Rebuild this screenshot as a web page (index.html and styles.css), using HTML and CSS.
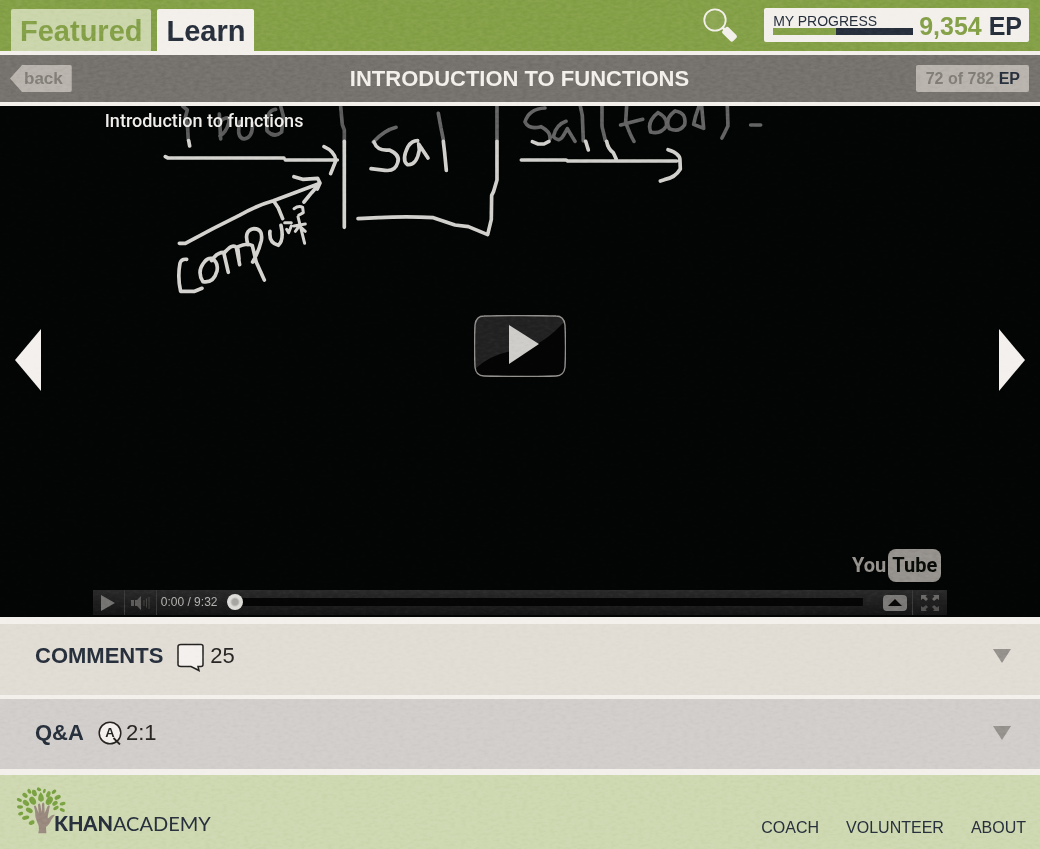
FILE: index.html
```html
<!DOCTYPE html>
<html lang="en">
<head>
<meta charset="utf-8">
<meta name="viewport" content="width=device-width, initial-scale=1">
<title>Introduction to Functions - Khan Academy</title>
<link rel="stylesheet" href="styles.css">
</head>
<body>
<header class="topbar">
  <nav class="tabs" aria-label="Main">
    <a class="tab" href="#featured">Featured</a>
    <a class="tab tab-active" href="#learn" aria-current="page">Learn</a>
  </nav>
  <button class="search" type="button" aria-label="Search">
    <svg width="34" height="34" viewBox="0 0 34 34"><circle cx="12" cy="12" r="10.700" fill="#96ae60" fill-opacity=".5" stroke="#f3f0eb" stroke-width="1.800"/><path d="M19 19l4 4" stroke="#f3f0eb" stroke-width="2.500"/><rect x="19" y="22" width="15" height="8.500" rx="2.500" transform="rotate(45 26.500 26.250)" fill="#f3f0eb"/></svg>
  </button>
  <section class="progress">
    <div class="meter">
      <span>MY PROGRESS</span>
      <div class="meter-track"><div class="meter-fill" style="width:45%"></div></div>
    </div>
    <div class="points">9,354 <b>EP</b></div>
  </section>
</header>

<div class="lessonbar">
  <a class="back" href="#back">back</a>
  <h1>INTRODUCTION TO FUNCTIONS</h1>
  <div class="earned">72 of 782 <b>EP</b></div>
</div>

<main>
  <section class="video">
    <svg class="frame" viewBox="0 106 1040 511" preserveAspectRatio="xMidYMin slice" fill="none" stroke-linecap="round" stroke-linejoin="round" aria-hidden="true">
      <g transform="translate(90 100) scale(.3333)" stroke="#d5d3cf" stroke-width="11">
        <path stroke="#5c5c5c" d="M278 18l14 12-6 22 6 18 3 50M388 42l4 75M388 65q35-25 28 5-8 28-26 38M450 65q-12 48 12 52 28-4 25-48M572 18l8 30-5 48q-22 20-44-4-4-62 26-64M752 18l5 56 6 16v34"/>
        <path d="M296 122l3 16M226 170l8 4H582M586 180H742M702 140q32 14 36 41l-16 40M763 124V382"/>
        <path d="M268 430h18q82-45 162-84 58-32 102-44l140-52-25 28-23 28M612 230l26 8 45-3 7 14-8 18M553 306l12 18 13 32"/>
        <path d="M290 478q-16-2-20 12-8 42 2 84h42l22-9M344 485q-25 30-5 60 32 5 42-32 5-27-16-38-13-1-21 10M365 482q15-25 36-25l14 60M402 460q25-31 37-18l10 52M447 477l-4-36q28-14 44-4l12 50 24 53M474 434q-14-43 18-48 28 1 22 36-8 33-26 64M540 394q-4 35 25 42 18-16 8-60"/>
        <path stroke-width="9" d="M584 368h20M590 388l6 10 8-20M612 326q14-10 26-4l2 16-14 8M624 350l8 32 12 48M612 378l34-6M616 394l12-16 18 16"/>
      </g>
      <g transform="translate(330 100) scale(.3333)" stroke="#d1d0cc" stroke-width="11">
        <path stroke="#666" d="M198 82q-35 9-68 44M325 40l8 44 7 34M501 18v104"/>
        <path d="M132 126q10 28 46 24 34 15 25 38-7 27-38 23l-42-5M263 122q-18 0-29 18-20 40-2 54 28 3 36-44l-2-18 28 42M340 124l4 35 5 52M501 124v116l-10 34-6 12-1 72-11 46-58-24-40-5-65-22q-80-5-164 0l-62 3"/>
      </g>
      <g transform="translate(510 100) scale(.3333)" stroke="#d1d0cc" stroke-width="11">
        <path stroke="#646464" d="M105 24q-48 2-60 42 12 24 48 14 30 16 27 36M168 64q-30 10-38 46 19 22 34-10l8-14 23 38M211 18l6 29 3 76M276 18v61l10 42M350 18l-3 48q12 36 25 58M332 75l66-17M444 38q-34 27-22 58 30 8 47-17 5-27-25-41M495 33q-33 25-17 53 29 13 46-12 7-36-29-41M575 18l6 67-30-12 6-25 10-29M652 18l2 60-18 36M722 75h30"/>
        <path d="M67 125l17 7h18l15-8M227 124l8 26M290 124q4 23 20 34l9 20M34 180l134 0 5 3H500M474 149q37 11 36 32l1 26q-15 26-48 32l-12 4"/>
      </g>
    </svg>
    <button class="step step-prev" type="button" aria-label="Previous video"><svg width="26" height="62" viewBox="0 0 26 62"><path d="M26 0v62L0 31z" fill="#f3f0ed"/></svg></button>
    <div class="player">
      <h2>Introduction to functions</h2>
      <button class="bigplay" type="button" aria-label="Play video">
        <svg width="92" height="62" viewBox="0 0 92 62"><path d="M10 1Q46 0 82 1q8 0 9 9 1 21 0 42-1 9-9 9-36 1-72 0-8 0-9-9-1-21 0-42 1-9 9-9z" fill="#030403"/><path d="M1 52Q0 31 1 10q1-9 9-9 36-1 72 0 7 0 8 6-20 22-40 27-31 3-48 19z" fill="#222"/><path d="M10 1Q46 0 82 1q8 0 9 9 1 21 0 42-1 9-9 9-36 1-72 0-8 0-9-9-1-21 0-42 1-9 9-9z" fill="none" stroke="#92908d" stroke-width="1.400"/><path d="M35 10v39l30-20z" fill="#cfcdca"/></svg>
      </button>
      <div class="youtube"><span>You</span><span class="tube">Tube</span></div>
      <div class="controls">
        <button type="button" class="ctl" aria-label="Play"><svg width="14" height="16" viewBox="0 0 14 16"><path d="M0 0v16l14-8z" fill="#747371"/></svg></button>
        <button type="button" class="ctl" aria-label="Mute"><svg width="20" height="14" viewBox="0 0 20 14"><path d="M1 4h3v6H1zM5 4h2l4-4v14l-4-4H5z" fill="#5c5b59"/><path d="M14 4v6M16.500 2.500v9M19 1v12" stroke="#454443"/></svg></button>
        <span class="time">0:00 / 9:32</span>
        <input class="seek" type="range" min="0" max="572" value="0" aria-label="Seek">
        <button type="button" class="menu" aria-label="Player menu"><svg width="24" height="16" viewBox="0 0 24 16"><rect width="24" height="16" rx="4" fill="#7b7977"/><path d="M5 11h14l-7-7z" fill="#070707"/></svg></button>
        <button type="button" class="ctl full" aria-label="Full screen"><svg width="18" height="16" viewBox="0 0 18 16" fill="#696866"><path d="M0 0h6L4.500 1.500 7 4 5 6 2 3.500 0 5zM18 0h-6l1.500 1.500L11 4l2 2 3-2.500L18 5z"/><path opacity=".7" d="M0 16h6l-1.500-1.500L7 12l-2-2-3 2.500L0 11zM18 16h-6l1.500-1.500L11 12l2-2 3 2.500 2-1.500z"/></svg></button>
      </div>
    </div>
    <button class="step step-next" type="button" aria-label="Next video"><svg width="26" height="62" viewBox="0 0 26 62"><path d="M0 0v62l26-31z" fill="#f3f0ed"/></svg></button>
  </section>

  <button class="panel comments" type="button" aria-expanded="false">
    <b>COMMENTS</b>
    <svg class="bubble" width="28" height="29" viewBox="0 0 28 29"><path d="M4 1.500h20q2 0 2 2v18q0 2-2 2h-3l1 4-8-4H4q-3 0-3-2v-18q0-2 3-2z" fill="#f3f0ed" stroke="#252321" stroke-width="1.500"/></svg>
    <span>25</span>
    <svg class="caret" width="18" height="14" viewBox="0 0 18 14"><path d="M0 0h18L9 14z" fill="#96938f"/></svg>
  </button>
  <button class="panel qa" type="button" aria-expanded="false">
    <b>Q&amp;A</b>
    <svg class="answer" width="24" height="24" viewBox="0 0 24 24"><circle cx="12" cy="12" r="10.800" fill="#f3f0ed" stroke="#252321" stroke-width="1.500"/><text x="12" y="16" text-anchor="middle">A</text><path d="M15.500 17l6.500 6.500" stroke="#252321" stroke-width="1.800"/></svg>
    <span>2:1</span>
    <svg class="caret" width="18" height="14" viewBox="0 0 18 14"><path d="M0 0h18L9 14z" fill="#96938f"/></svg>
  </button>
</main>

<footer class="footer">
  <a class="brand" href="#home">
    <svg width="51" height="48" viewBox="48 62 153 144" aria-hidden="true">
      <g fill="#7ba342">
        <ellipse cx="88" cy="78" rx="5" ry="8" transform="rotate(-30 88 78)"/><ellipse cx="103" cy="83" rx="7" ry="10" transform="rotate(-20 103 83)"/><ellipse cx="117" cy="72" rx="5" ry="7" transform="rotate(-60 117 72)"/><ellipse cx="133" cy="77" rx="4" ry="7" transform="rotate(20 133 77)"/><ellipse cx="145" cy="87" rx="6" ry="10" transform="rotate(20 145 87)"/><ellipse cx="162" cy="79" rx="5" ry="8" transform="rotate(50 162 79)"/>
        <ellipse cx="75" cy="90" rx="6" ry="9" transform="rotate(-50 75 90)"/><path d="M122 80q-10 14-7 25l8 5 8-5q3-12-9-25z"/><ellipse cx="148" cy="106" rx="9" ry="14" transform="rotate(30 148 106)"/><ellipse cx="98" cy="106" rx="9" ry="13" transform="rotate(-30 98 106)"/><ellipse cx="173" cy="96" rx="6" ry="10" transform="rotate(60 173 96)"/>
        <ellipse cx="58" cy="104" rx="5" ry="8" transform="rotate(-70 58 104)"/><ellipse cx="78" cy="113" rx="7" ry="11" transform="rotate(-50 78 113)"/><ellipse cx="165" cy="114" rx="6" ry="9" transform="rotate(50 165 114)"/><ellipse cx="188" cy="115" rx="5" ry="9" transform="rotate(75 188 115)"/><ellipse cx="60" cy="125" rx="5" ry="9" transform="rotate(-85 60 125)"/>
        <ellipse cx="168" cy="128" rx="5" ry="9" transform="rotate(60 168 128)"/><ellipse cx="187" cy="134" rx="5" ry="8" transform="rotate(-70 187 134)"/><ellipse cx="88" cy="135" rx="7" ry="11" transform="rotate(-60 88 135)"/><ellipse cx="62" cy="145" rx="5" ry="8" transform="rotate(75 62 145)"/><ellipse cx="77" cy="157" rx="6" ry="11" transform="rotate(75 77 157)"/><ellipse cx="95" cy="172" rx="6" ry="9" transform="rotate(65 95 172)"/>
      </g>
      <path d="M115 204q5-20-3-32-8-17-7-35l-3-14q4-6 7 3l7 18-2-26q4-7 7 0l4 24 1-27q4-7 7 0l1 29 9-22q6-5 6 2l-6 31q0 7 6 0 7-8 16-7-3 4-10 14-8 18-17 23l1 19z" fill="#9a8a80"/>
    </svg>
    <span class="wordmark"><b>KHAN</b>ACADEMY</span>
  </a>
  <nav class="links" aria-label="Footer">
    <a href="#coach">COACH</a>
    <a href="#volunteer">VOLUNTEER</a>
    <a href="#about">ABOUT</a>
  </nav>
</footer>

<svg class="paper" aria-hidden="true">
  <filter id="grain" x="0" y="0" width="100%" height="100%" color-interpolation-filters="sRGB">
    <feTurbulence type="fractalNoise" baseFrequency=".18 .36" numOctaves="3" seed="4"/>
    <feColorMatrix values=".16 0 0 0 .42 .16 0 0 0 .42 .16 0 0 0 .42 0 0 0 0 1"/>
  </filter>
  <rect width="100%" height="100%" filter="url(#grain)"/>
</svg>
</body>
</html>
```
FILE: styles.css
```css
:root {
  --green: #85a148;
  --paper: #f3f0ec;
  --navy: #27303c;
  --stone: #76726d;
}

* { box-sizing: border-box; }

body {
  position: relative;
  display: flex;
  flex-direction: column;
  min-height: 100vh;
  margin: 0;
  background: var(--paper);
  color: var(--navy);
  font-family: "Liberation Sans", Arial, sans-serif;
}

a { color: inherit; text-decoration: none; }
button { margin: 0; padding: 0; border: 0; background: none; color: inherit; font: inherit; cursor: pointer; }
svg { display: block; flex: none; }
h1, h2 { margin: 0; }

.topbar {
  display: flex;
  align-items: flex-start;
  height: 55px;
  padding: 8px 11px 0;
  border-bottom: 4px solid var(--paper);
  background: var(--green);
}

.tabs { display: flex; align-self: stretch; gap: 6px; margin: 1px auto 0 0; }

.tab {
  padding: 4px 9px 0;
  border-radius: 2px 2px 0 0;
  background: #cbd6ac;
  color: var(--green);
  font-size: 29px;
  font-weight: 700;
  line-height: 36px;
}

.tab-active { background: var(--paper); color: var(--navy); }

.search { margin-right: 27px; }

.progress {
  display: flex;
  align-items: center;
  gap: 6px;
  height: 34px;
  padding: 0 7px 0 9px;
  border-radius: 2px;
  background: var(--paper);
}

.meter { width: 140px; padding-bottom: 1px; font-size: 14px; line-height: 14px; }
.meter-track { height: 7px; background: var(--navy); }
.meter-fill { height: 100%; background: var(--green); }
.points { padding-top: 1px; color: var(--green); font-size: 25px; font-weight: 700; line-height: 34px; }
.points b, .earned b { color: var(--navy); }

.lessonbar {
  display: grid;
  grid-template-columns: 1fr auto 1fr;
  align-items: center;
  height: 51px;
  padding: 0 11px 0 10px;
  border-bottom: 4px solid var(--paper);
  background: var(--stone);
}

.lessonbar h1 { color: var(--paper); font-size: 22px; line-height: 26px; }

.back, .earned {
  background: #b9b4ad;
  color: #827e78;
  font-weight: 700;
  line-height: 27px;
}

.back {
  justify-self: start;
  padding: 0 9px 0 14px;
  border-radius: 0 2px 2px 0;
  clip-path: polygon(0 50%, 12px 0, 100% 0, 100% 100%, 12px 100%);
  font-size: 17px;
}

.earned { justify-self: end; padding: 0 9px 0 10px; border-radius: 2px; font-size: 16px; }

.video {
  position: relative;
  display: flex;
  justify-content: space-between;
  aspect-ratio: 1040 / 511;
  padding: 0 15px;
  background: #030504;
  overflow: hidden;
}

.frame { position: absolute; inset: 0; width: 100%; height: 100%; }
.step { position: relative; align-self: center; margin-bottom: 4px; }

.player {
  position: relative;
  display: grid;
  grid-template-rows: 1fr auto 1fr auto;
  width: 84.600%;
  padding-bottom: 2px;
}

.player h2 {
  padding: 4px 12px;
  color: #f1efec;
  font: 500 18px/22px Roboto, sans-serif;
}

.bigplay { justify-self: center; margin-bottom: 4px; }

.youtube {
  display: flex;
  align-items: center;
  align-self: end;
  justify-self: end;
  gap: 2px;
  margin: 0 6px 8px 0;
  color: #96938f;
  font: 700 20px/33px Roboto, sans-serif;
}

.tube { padding: 0 4px; border-radius: 8px; background: #96938f; color: #080a08; }

.controls {
  display: flex;
  align-items: center;
  height: 25px;
  background: linear-gradient(#2a2a2a, #151515);
}

.ctl { display: grid; place-items: center; width: 32px; height: 100%; border-right: 1px solid #3b3b3b; }
.time { padding: 0 10px 2px 4px; color: #b5b3b0; font-size: 12px; white-space: nowrap; }
.seek { flex: 1; min-width: 0; height: 16px; margin: 0 20px 2px 0; appearance: none; background: linear-gradient(#050505, #050505) center / 100% 8px no-repeat; }
.seek::-webkit-slider-thumb { width: 16px; height: 16px; appearance: none; border-radius: 50%; background: radial-gradient(circle, #aaa8a5 0 3px, #dedcd8 5px); }
.menu { margin-right: 5px; }
.full { width: 35px; border-right: 0; border-left: 1px solid #3b3b3b; }

.panel {
  display: flex;
  align-items: center;
  width: 100%;
  padding: 0 29px 0 35px;
  font-size: 22px;
  line-height: 26px;
  text-align: left;
}

.panel span { color: #292725; }
.comments { height: 82px; padding-bottom: 7px; border-top: 7px solid var(--paper); border-bottom: 4px solid var(--paper); background: #e1ddd5; }
.qa { height: 76px; padding-bottom: 2px; border-bottom: 6px solid var(--paper); background: #d2cecb; }
.bubble { margin: 2px 5px 0 14px; }
.answer { margin: 0 4px 0 14px; }
.answer text { fill: #252321; font: 700 13px "Liberation Sans", Arial, sans-serif; }
.caret { margin-left: auto; }

.footer {
  display: flex;
  flex: 1;
  align-items: flex-end;
  justify-content: space-between;
  padding: 11px 14px 11px 16px;
  background: #ced8b1;
}

.brand { display: flex; align-items: flex-end; padding-bottom: 4px; }
.wordmark { margin-left: -13px; font: 400 20px/21px Lato, sans-serif; }
.wordmark b { font-weight: 900; }
.links { display: flex; gap: 27px; font-size: 16px; line-height: 20px; }

.paper {
  position: absolute;
  inset: 0;
  width: 100%;
  height: 100%;
  mix-blend-mode: soft-light;
  pointer-events: none;
}
```
